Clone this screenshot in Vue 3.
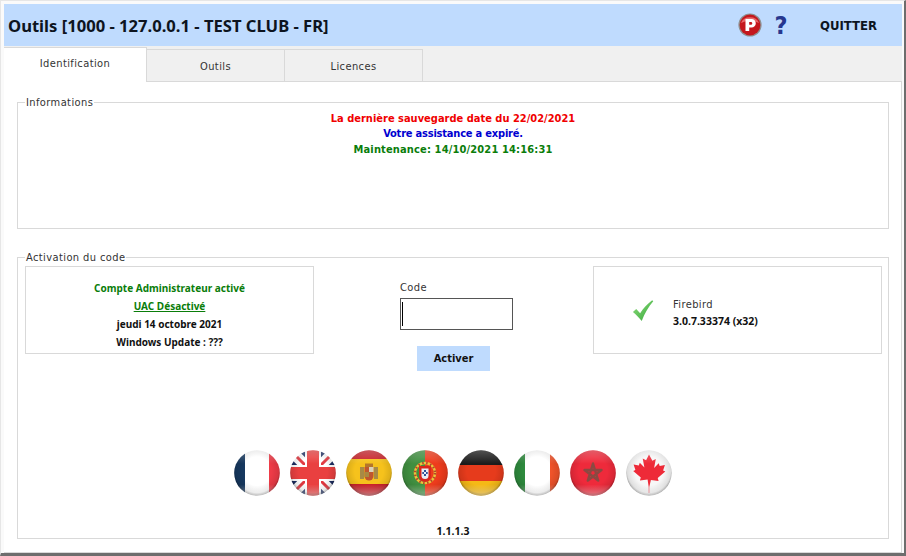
<script setup>
</script>

<template>
  <div class="window">
    <header class="title-bar">
      <h1 class="title">Outils [1000 - 127.0.0.1 - TEST CLUB - FR]</h1>
      <div class="title-actions">
        <svg class="help-p" width="24" height="24" viewBox="0 0 24 24">
          <circle cx="12" cy="12" r="11.6" fill="#8f8f8f" />
          <circle cx="12" cy="12" r="10.400" fill="#c4171d" />
          <path d="M3 10a9.500 8.500 0 0 1 18 0a12 6 0 0 0-18 0z" fill="#e8686a" />
          <path d="M7.500 6h6a4.300 4.300 0 0 1 0 8.600h-2.300V18H7.500zM11.200 9v2.800h1.700a1.400 1.400 0 0 0 0-2.800z" fill="#fff" fill-rule="evenodd" />
        </svg>
        <span class="help-q">?</span>
        <button class="quit">QUITTER</button>
      </div>
    </header>

    <nav class="tabs">
      <div class="tab active">Identification</div>
      <div class="tab">Outils</div>
      <div class="tab">Licences</div>
    </nav>

    <main class="panel">
      <fieldset class="group info">
        <legend>Informations</legend>
        <p class="red">La dernière sauvegarde date du 22/02/2021</p>
        <p class="blue tight">Votre assistance a expiré.</p>
        <p class="green wide">Maintenance: 14/10/2021 14:16:31</p>
      </fieldset>

      <fieldset class="group activation">
        <legend>Activation du code</legend>
        <div class="row">
          <div class="box status">
            <p class="green">Compte Administrateur activé</p>
            <p class="green link">UAC Désactivé</p>
            <p>jeudi 14 octobre 2021</p>
            <p>Windows Update : ???</p>
          </div>

          <div class="code-col">
            <label class="code-label">Code</label>
            <div class="code-input"><span class="caret"></span></div>
            <button class="activate">Activer</button>
          </div>

          <div class="box firebird">
            <svg class="check" width="22" height="23" viewBox="0 0 24 24">
              <defs>
                <linearGradient id="checkFill" x1="0" y1="0" x2="1" y2="1">
                  <stop offset="0" stop-color="#8fdc7c" />
                  <stop offset="1" stop-color="#35a83a" />
                </linearGradient>
              </defs>
              <path d="M1 13.500l3.600-3.200 4.300 4.600C12.500 9.500 16.500 5 22 .8l1.200 1.200C18 8 14 15 10.600 23.500 7.500 19.500 4.500 16.500 1 13.500z" fill="url(#checkFill)" />
            </svg>
            <div class="fb-text">
              <div class="fb-name">Firebird</div>
              <div class="fb-version">3.0.7.33374 (x32)</div>
            </div>
          </div>
        </div>

        <div class="flags">
          <!-- France -->
          <svg class="flag" viewBox="0 0 46 46">
            <defs>
              <clipPath id="disc"><circle cx="23" cy="23" r="22.8" /></clipPath>
              <radialGradient id="shade" cx="50%" cy="46%" r="52%">
                <stop offset="0.6" stop-color="#000" stop-opacity="0" />
                <stop offset="0.9" stop-color="#000" stop-opacity="0.1" />
                <stop offset="1" stop-color="#000" stop-opacity="0.35" />
              </radialGradient>
              <linearGradient id="gloss" x1="0" y1="0" x2="0" y2="1">
                <stop offset="0" stop-color="#fff" stop-opacity="0.25" />
                <stop offset="0.3" stop-color="#fff" stop-opacity="0" />
                <stop offset="0.75" stop-color="#fff" stop-opacity="0" />
                <stop offset="1" stop-color="#fff" stop-opacity="0.4" />
              </linearGradient>
              <filter id="soft"><feGaussianBlur stdDeviation="0.35" /></filter>
            </defs>
            <g clip-path="url(#disc)">
              <g filter="url(#soft)">
                <rect width="46" height="46" fill="#fff" />
                <rect width="11" height="46" fill="#12385f" />
                <rect x="35" width="11" height="46" fill="#ee3b47" />
              </g>
              <circle cx="23" cy="23" r="23" fill="url(#shade)" />
              <rect width="46" height="46" fill="url(#gloss)" />
            </g>
          </svg>

          <!-- Royaume-Uni -->
          <svg class="flag" viewBox="0 0 46 46">
            <g clip-path="url(#disc)">
              <g filter="url(#soft)">
                <rect width="46" height="46" fill="#1c2f63" />
                <path d="M0 0L46 46M46 0L0 46" stroke="#fff" stroke-width="11" />
                <path d="M0 0L46 46M46 0L0 46" stroke="#e2393f" stroke-width="3" />
                <path d="M23 0V46M0 23H46" stroke="#fff" stroke-width="16" />
                <path d="M23 0V46M0 23H46" stroke="#e9413f" stroke-width="12" />
              </g>
              <circle cx="23" cy="23" r="23" fill="url(#shade)" />
              <rect width="46" height="46" fill="url(#gloss)" />
            </g>
          </svg>

          <!-- Espagne -->
          <svg class="flag" viewBox="0 0 46 46">
            <g clip-path="url(#disc)">
              <g filter="url(#soft)">
                <rect width="46" height="46" fill="#c8202a" />
                <rect y="9" width="46" height="25" fill="#f6c21c" />
                <rect x="14" y="17" width="4" height="12" fill="#a78a45" />
                <rect x="28" y="17" width="4" height="12" fill="#a78a45" />
                <path d="M19 13.500h8v4h-8z" fill="#b5762a" />
                <path d="M18.500 17h9v9a4.500 4.500 0 0 1-9 0z" fill="#c0562f" />
                <rect x="23" y="17" width="4.500" height="5" fill="#d9d2b8" />
                <rect x="18.500" y="22" width="4.500" height="5" fill="#a9883f" />
              </g>
              <circle cx="23" cy="23" r="23" fill="url(#shade)" />
              <rect width="46" height="46" fill="url(#gloss)" />
            </g>
          </svg>

          <!-- Portugal -->
          <svg class="flag" viewBox="0 0 46 46">
            <g clip-path="url(#disc)">
              <g filter="url(#soft)">
                <rect width="46" height="46" fill="#ee3a1d" />
                <rect width="23" height="46" fill="#3f8f3f" />
                <circle cx="23" cy="23" r="10" fill="none" stroke="#e9c43a" stroke-width="2.500" />
                <circle cx="23" cy="23" r="10" fill="none" stroke="#b5472a" stroke-width="2.500" stroke-dasharray="1.500 2.500" />
                <path d="M17 16h12v10a6 6 0 0 1-12 0z" fill="#d8281f" />
                <path d="M19.500 18.500h7v7a3.500 3.500 0 0 1-7 0z" fill="#e8edf3" />
                <path d="M22 20h2v2h-2zM22 24h2v2h-2zM20.300 22h1.700v2h-1.700zM24 22h1.700v2H24z" fill="#2e4f96" />
              </g>
              <circle cx="23" cy="23" r="23" fill="url(#shade)" />
              <rect width="46" height="46" fill="url(#gloss)" />
            </g>
          </svg>

          <!-- Allemagne -->
          <svg class="flag" viewBox="0 0 46 46">
            <g clip-path="url(#disc)">
              <g filter="url(#soft)">
                <rect width="46" height="15" fill="#1c1c1c" />
                <rect y="15" width="46" height="16" fill="#e63a1e" />
                <rect y="31" width="46" height="15" fill="#f5b914" />
              </g>
              <circle cx="23" cy="23" r="23" fill="url(#shade)" />
              <rect width="46" height="46" fill="url(#gloss)" />
            </g>
          </svg>

          <!-- Italie -->
          <svg class="flag" viewBox="0 0 46 46">
            <g clip-path="url(#disc)">
              <g filter="url(#soft)">
                <rect width="46" height="46" fill="#fff" />
                <rect width="11" height="46" fill="#2f8a3d" />
                <rect x="36" width="10" height="46" fill="#f0532a" />
              </g>
              <circle cx="23" cy="23" r="23" fill="url(#shade)" />
              <rect width="46" height="46" fill="url(#gloss)" />
            </g>
          </svg>

          <!-- Maroc -->
          <svg class="flag" viewBox="0 0 46 46">
            <g clip-path="url(#disc)">
              <g filter="url(#soft)">
                <rect width="46" height="46" fill="#ee2a3a" />
                <path d="M23 13.500l5.200 17-13.700-10.500h17L17.800 30.500z" fill="none" stroke="#8a4a42" stroke-width="2.400" stroke-linejoin="round" />
              </g>
              <circle cx="23" cy="23" r="23" fill="url(#shade)" />
              <rect width="46" height="46" fill="url(#gloss)" />
            </g>
          </svg>

          <!-- Canada -->
          <svg class="flag" viewBox="0 0 46 46">
            <g clip-path="url(#disc)">
              <g filter="url(#soft)">
                <rect width="46" height="46" fill="#f7f7f7" />
                <path d="M23 4.500l3.400 6.300 3.400-1.800-1.700 9 4.600-4.800 1 2.700 5.200-1-1.800 5.700 2.200 1-7.600 6.400.9 2.900-7.700-1L23.300 37v6h-.6v-6l-1.100-7.600-7.700 1 .9-2.900-7.600-6.400 2.200-1L7.600 14.400l5.200 1 1-2.700 4.600 4.800-1.700-9 3.400 1.800z" fill="#ee2938" />
              </g>
              <circle cx="23" cy="23" r="23" fill="url(#shade)" />
              <rect width="46" height="46" fill="url(#gloss)" />
            </g>
          </svg>
        </div>

        <div class="build">1.1.1.3</div>
      </fieldset>
    </main>
  </div>
</template>

<style>
html,
body {
  margin: 0;
  background: #f4f4f4;
}
</style>

<style scoped>
.window {
  width: 906px;
  height: 556px;
  box-sizing: border-box;
  padding: 3px 2px 2px 3px;
  display: flex;
  flex-direction: column;
  background: #fafafa;
  border-top: 1px solid #e6e6e6;
  border-right: 2px solid #6d6d6d;
  border-bottom: 3px solid #6d6d6d;
  border-left: 1px solid #e6e6e6;
  font-family: "DejaVu Sans Condensed", "DejaVu Sans", sans-serif;
  font-size: 11px;
  color: #111;
}

.title-bar {
  height: 42px;
  flex: none;
  display: flex;
  align-items: center;
  justify-content: space-between;
  background: #bfdbfe;
  padding-left: 4px;
}

.title {
  margin: 0;
  font-family: "Noto Sans", sans-serif;
  font-size: 16.6px;
  font-weight: 700;
  color: #0d1420;
}

.title-actions {
  display: flex;
  align-items: center;
}

.help-p {
  margin-right: 11px;
}

.help-q {
  width: 16px;
  margin-right: 6px;
  font-size: 25px;
  font-weight: 700;
  line-height: 1;
  color: #27378f;
  text-align: center;
}

.quit {
  width: 107px;
  border: 0;
  background: none;
  padding: 0;
  font: 700 13px "DejaVu Sans Condensed", "DejaVu Sans", sans-serif;
  color: #0d1420;
}

.tabs {
  flex: none;
  height: 36px;
  box-sizing: border-box;
  display: flex;
  align-items: flex-end;
  background: #f0f0f0;
  border-bottom: 1px solid #d9d9d9;
}

.tab {
  width: 138px;
  height: 32px;
  box-sizing: border-box;
  display: flex;
  align-items: center;
  justify-content: center;
  padding-top: 1px;
  border: 1px solid #d9d9d9;
  border-left: 0;
  border-bottom: 0;
  background: #f0f0f0;
  color: #333;
  letter-spacing: 0.4px;
}

.tab.active {
  width: 143px;
  height: 35px;
  margin-bottom: -1px;
  padding: 0 0 3px;
  background: #fff;
}

.panel {
  flex: 1;
  display: flex;
  flex-direction: column;
  gap: 22px;
  padding: 13px 12px 13px 13px;
  background: #fff;
  border-right: 1px solid #d9d9d9;
  border-bottom: 1px solid #d9d9d9;
}

.group {
  margin: 0;
  min-width: 0;
  border: 1px solid #d9d9d9;
  box-sizing: border-box;
  padding: 0;
}

.group legend {
  margin-left: 7px;
  padding: 0 1px;
  font-weight: 400;
  color: #333;
  letter-spacing: 0.4px;
}

.group p {
  margin: 0;
}

.info {
  height: 134px;
  font-weight: 700;
  line-height: 15.5px;
}

.info p {
  text-align: center;
}

.red {
  color: #f00000;
}

.blue {
  color: #0000d0;
}

.green {
  color: #0a7d0a;
}

.tight {
  letter-spacing: -0.2px;
}

.wide {
  letter-spacing: 0.15px;
}

.activation {
  flex: 1;
  min-height: 0;
  display: flex;
  flex-direction: column;
  padding: 2px 7px 0;
}

.activation legend {
  margin-left: 0;
}

.row {
  display: grid;
  grid-template-columns: 289px 279px 289px;
  grid-template-rows: 88px;
}

.box {
  box-sizing: border-box;
  border: 1px solid #d9d9d9;
}

.status {
  display: flex;
  flex-direction: column;
  justify-content: center;
  padding-top: 10px;
  text-align: center;
  font-family: "Noto Sans", sans-serif;
  font-size: 10px;
  font-weight: 700;
  line-height: 18px;
}

.link {
  text-decoration: underline;
}

.code-col {
  display: flex;
  flex-direction: column;
  align-items: flex-start;
  padding: 15px 0 0 86px;
}

.code-label {
  flex: none;
  height: 17px;
  line-height: 14px;
  color: #333;
  letter-spacing: 0.4px;
}

.code-input {
  width: 113px;
  height: 32px;
  box-sizing: border-box;
  flex: none;
  border: 1px solid #555;
  background: #fff;
  padding: 3px 1px;
}

.caret {
  display: block;
  width: 1px;
  height: 24px;
  background: #000;
}

.activate {
  flex: none;
  width: 73px;
  height: 25px;
  margin: 16px 0 0 17px;
  border: 0;
  padding: 0;
  background: #bfdbfe;
  font: 700 11px "DejaVu Sans Condensed", "DejaVu Sans", sans-serif;
  color: #111;
}

.firebird {
  display: flex;
  align-items: center;
  padding-left: 38px;
  gap: 19px;
}

.check {
  flex: none;
}

.fb-text {
  margin-top: 6px;
  line-height: 16px;
}

.fb-name {
  color: #333;
  letter-spacing: 0.4px;
}

.fb-version {
  font-family: "Noto Sans", sans-serif;
  font-size: 10.5px;
  font-weight: 700;
}

.flags {
  display: flex;
  justify-content: center;
  gap: 10px;
  margin-top: 96px;
}

.flag {
  width: 46px;
  height: 46px;
  flex: none;
}

.build {
  margin-top: 28px;
  text-align: center;
  font-family: "Noto Sans", sans-serif;
  font-size: 10.5px;
  font-weight: 700;
  line-height: 14px;
}
</style>
